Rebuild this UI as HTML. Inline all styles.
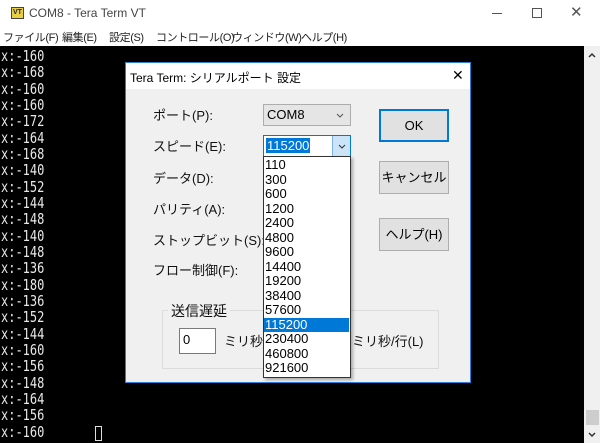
<!DOCTYPE html>
<html><head><meta charset="utf-8"><style>
*{margin:0;padding:0;box-sizing:border-box}
body{width:600px;height:443px;overflow:hidden;background:#fff;position:relative;font-family:"Liberation Sans","Noto Sans CJK JP",sans-serif;}
.abs{position:absolute}
#title{left:0;top:0;width:600px;height:27px;background:#fff;}
#menu{left:0;top:27px;width:600px;height:19px;background:#fff;font-size:11px;color:#222;letter-spacing:-0.4px}
#menu span{white-space:nowrap}
#term{left:0;top:46px;width:584px;height:397px;background:#000;}
.tl{position:absolute;left:1px;color:#e8e8e8;font-family:"DejaVu Sans Mono","Liberation Mono",monospace;font-size:12px;transform:scaleY(1.25);transform-origin:left center;line-height:16px;}
#sb{left:584px;top:46px;width:16px;height:397px;background:#f0f0f0;}
#dlg{left:125px;top:62px;width:346px;height:321px;background:#f0f0f0;border:1px solid #2b7fd6;}
#dt{left:0;top:0;width:344px;height:26px;background:#fff;font-size:12px;}
.lab{position:absolute;font-size:13px;color:#111;white-space:nowrap}
.combo{position:absolute;background:#e5e5e5;border:1px solid #adadad;font-size:13px;}
.btn{position:absolute;background:#e1e1e1;border:1px solid #adadad;font-size:13px;text-align:center;}
.it{position:absolute;left:0;width:85px;height:14.5px;line-height:14.5px;font-size:13px;padding-left:1px;color:#000}
</style></head><body>
<div id="title" class="abs">
 <div class="abs" style="left:11px;top:7px;width:13px;height:12px;background:#e8d040;border:1px solid #444;font-size:7px;font-weight:bold;color:#223;line-height:10px;text-align:center">VT</div>
 <div class="abs" style="left:29px;top:6px;font-size:12px;color:#444">COM8 - Tera Term VT</div>
 <div class="abs" style="left:492px;top:13px;width:10px;height:1px;background:#555"></div>
 <div class="abs" style="left:532px;top:8px;width:10px;height:10px;border:1px solid #555"></div>
 <div class="abs" style="left:570px;top:3px;font-size:15px;color:#555">✕</div>
</div>
<div id="menu" class="abs">
 <span class="abs" style="left:3px;top:2px">ファイル(F)</span>
 <span class="abs" style="left:62px;top:2px">編集(E)</span>
 <span class="abs" style="left:109px;top:2px">設定(S)</span>
 <span class="abs" style="left:156px;top:2px">コントロール(O)</span>
 <span class="abs" style="left:232px;top:2px">ウィンドウ(W)</span>
 <span class="abs" style="left:301px;top:2px">ヘルプ(H)</span>
</div>
<div id="term" class="abs">
<div class="tl" style="top:2px">x:-160</div><div class="tl" style="top:18.3px">x:-168</div><div class="tl" style="top:34.7px">x:-160</div><div class="tl" style="top:51px">x:-160</div><div class="tl" style="top:67.4px">x:-172</div><div class="tl" style="top:83.7px">x:-164</div><div class="tl" style="top:100px">x:-168</div><div class="tl" style="top:116.4px">x:-140</div><div class="tl" style="top:132.7px">x:-152</div><div class="tl" style="top:149px">x:-144</div><div class="tl" style="top:165.4px">x:-148</div><div class="tl" style="top:181.7px">x:-140</div><div class="tl" style="top:198px">x:-148</div><div class="tl" style="top:214.4px">x:-136</div><div class="tl" style="top:230.7px">x:-180</div><div class="tl" style="top:247px">x:-136</div><div class="tl" style="top:263.4px">x:-152</div><div class="tl" style="top:279.7px">x:-144</div><div class="tl" style="top:296px">x:-160</div><div class="tl" style="top:312.4px">x:-156</div><div class="tl" style="top:328.7px">x:-148</div><div class="tl" style="top:345px">x:-164</div><div class="tl" style="top:361.4px">x:-156</div><div class="tl" style="top:377.7px">x:-160</div>
<div class="abs" style="left:95px;top:380px;width:7px;height:15px;border:1px solid #ddd"></div>
</div>
<div id="sb" class="abs">
 <svg class="abs" style="left:4px;top:6px" width="8" height="6"><path d="M1 5L4 2L7 5" stroke="#333" stroke-width="1.5" fill="none"/></svg>
 <div class="abs" style="left:2px;top:364px;width:13px;height:15px;background:#cdcdcd"></div>
 <svg class="abs" style="left:4px;top:386px" width="8" height="6"><path d="M1 1L4 4L7 1" stroke="#333" stroke-width="1.5" fill="none"/></svg>
</div>
<div id="dlg" class="abs">
 <div id="dt" class="abs"><span class="abs" style="left:4px;top:6px">Tera Term: シリアルポート 設定</span><span class="abs" style="left:326px;top:4px;font-size:14px">✕</span></div>
 <div class="lab" style="left:27px;top:42px">ポート(P):</div>
 <div class="lab" style="left:27px;top:73px">スピード(E):</div>
 <div class="lab" style="left:27px;top:105px">データ(D):</div>
 <div class="lab" style="left:27px;top:136px">パリティ(A):</div>
 <div class="lab" style="left:27px;top:167px">ストップビット(S):</div>
 <div class="lab" style="left:27px;top:197px">フロー制御(F):</div>
 <div class="combo" style="left:137px;top:41px;width:88px;height:22px"><span class="abs" style="left:3px;top:2px">COM8</span><svg class="abs" style="left:72px;top:8px" width="8" height="5"><path d="M1 1L4 4L7 1" stroke="#555" fill="none"/></svg></div>
 <div class="combo" style="left:137px;top:72px;width:88px;height:22px;background:#fff;border-color:#0078d7"><span class="abs" style="left:2px;top:2px;background:#0078d7;color:#fff;padding:0 1px">115200</span><div class="abs" style="left:68px;top:0;width:18px;height:20px;background:#cce4f7;border-left:1px solid #7eb4ea"><svg class="abs" style="left:5px;top:8px" width="8" height="5"><path d="M1 1L4 4L7 1" stroke="#333" fill="none"/></svg></div></div>
 <div class="btn" style="left:253px;top:46px;width:70px;height:33px;border:2px solid #0078d7;line-height:29px">OK</div>
 <div class="btn" style="left:253px;top:98px;width:70px;height:33px;line-height:31px">キャンセル</div>
 <div class="btn" style="left:253px;top:155px;width:70px;height:33px;line-height:31px">ヘルプ(H)</div>
 <div class="abs" style="left:36px;top:247px;width:277px;height:59px;border:1px solid #dcdcdc"></div>
 <div class="lab" style="left:42px;top:238px;background:#f0f0f0;padding:0 3px;font-size:14px">送信遅延</div>
 <div class="abs" style="left:53px;top:265px;width:37px;height:26px;background:#fff;border:1px solid #7a7a7a;font-size:13px;padding:3px 3px">0</div>
 <div class="lab" style="left:98px;top:268px">ミリ秒/字(C)</div>
 <div class="lab" style="left:226px;top:268px">ミリ秒/行(L)</div>
 <div class="abs" style="left:137px;top:93px;width:88px;height:222px;background:#fff;border:1px solid #333;box-shadow:2px 2px 3px rgba(0,0,0,.3)">
  <div class="it" style="top:1px">110</div><div class="it" style="top:15.5px">300</div><div class="it" style="top:30px">600</div><div class="it" style="top:44.5px">1200</div><div class="it" style="top:59px">2400</div><div class="it" style="top:73.5px">4800</div><div class="it" style="top:88px">9600</div><div class="it" style="top:102.5px">14400</div><div class="it" style="top:117px">19200</div><div class="it" style="top:131.5px">38400</div><div class="it" style="top:146px">57600</div><div class="it" style="top:160.5px;background:#0078d7;color:#fff">115200</div><div class="it" style="top:175px">230400</div><div class="it" style="top:189.5px">460800</div><div class="it" style="top:204px">921600</div>
 </div>
</div>
</body></html>
